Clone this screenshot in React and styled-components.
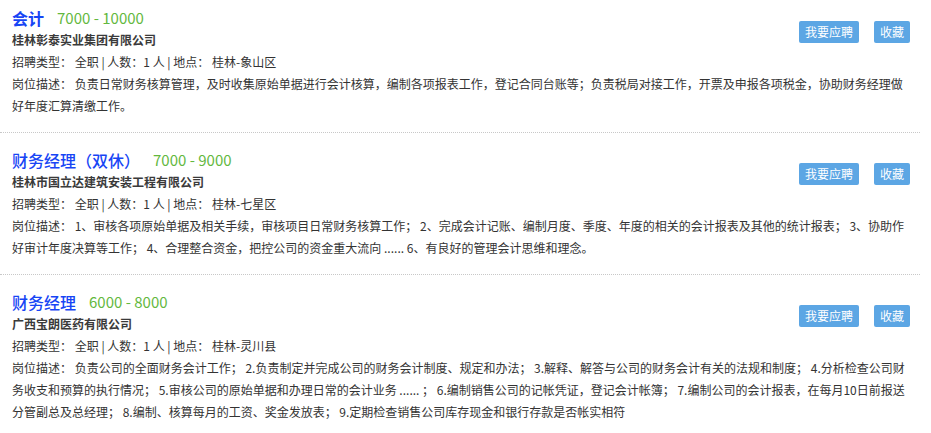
import React from "react";
import styled, { createGlobalStyle } from "styled-components";

const GlobalStyle = createGlobalStyle`
  body {
    margin: 0;
    background: #fff;
    font-family: "Noto Sans CJK SC", "Microsoft YaHei", sans-serif;
    color: #333;
  }
`;

const JobList = styled.ul`
  width: 920px;
  margin: 0;
  padding: 0;
  list-style: none;
`;

const JobItem = styled.li`
  padding: 16px 10px 15px 12px;
  border-bottom: 1px dotted #c8c8c8;

  &:first-child {
    padding-top: 7px;
  }

  &:last-child {
    border-bottom: none;
  }
`;

const Header = styled.div`
  display: flex;
  justify-content: space-between;
  align-items: flex-start;
`;

const Info = styled.div`
  display: flex;
  flex-direction: column;
`;

const TitleRow = styled.div`
  display: flex;
  align-items: center;
  height: 22px;
`;

const JobTitle = styled.a`
  font-size: 16px;
  line-height: 22px;
  color: #1745f5;
  font-weight: ${(p) => (p.$bold ? 700 : 500)};
  text-decoration: none;
`;

const Salary = styled.span`
  margin-left: 13px;
  font-size: 15px;
  line-height: 22px;
  color: #63b83e;
`;

const Company = styled.div`
  font-size: 12px;
  line-height: 22px;
  font-weight: 700;
  color: #3a3a3a;
`;

const Line = styled.div`
  font-size: 12px;
  line-height: 22px;
  color: #333;
`;

const Actions = styled.div`
  display: flex;
  gap: 15px;
  margin-top: 14px;
`;

const ActionButton = styled.button`
  height: 22px;
  padding: 0 6px;
  border: none;
  border-radius: 2px;
  background: #5ca6e4;
  color: #fff;
  font-family: inherit;
  font-size: 12px;
  line-height: 22px;
  cursor: pointer;
`;

const jobs = [
  {
    title: "会计",
    bold: true,
    salary: "7000 - 10000",
    company: "桂林彰泰实业集团有限公司",
    place: "桂林-象山区",
    desc: "负责日常财务核算管理，及时收集原始单据进行会计核算，编制各项报表工作，登记合同台账等；负责税局对接工作，开票及申报各项税金，协助财务经理做好年度汇算清缴工作。",
  },
  {
    title: "财务经理（双休）",
    salary: "7000 - 9000",
    company: "桂林市国立达建筑安装工程有限公司",
    place: "桂林-七星区",
    desc: "1、审核各项原始单据及相关手续，审核项目日常财务核算工作； 2、完成会计记账、编制月度、季度、年度的相关的会计报表及其他的统计报表； 3、协助作好审计年度决算等工作； 4、合理整合资金，把控公司的资金重大流向 ...... 6、有良好的管理会计思维和理念。",
  },
  {
    title: "财务经理",
    salary: "6000 - 8000",
    company: "广西宝朗医药有限公司",
    place: "桂林-灵川县",
    desc: "负责公司的全面财务会计工作； 2.负责制定并完成公司的财务会计制度、规定和办法； 3.解释、解答与公司的财务会计有关的法规和制度； 4.分析检查公司财务收支和预算的执行情况； 5.审核公司的原始单据和办理日常的会计业务 ...... ； 6.编制销售公司的记帐凭证，登记会计帐簿； 7.编制公司的会计报表，在每月10日前报送分管副总及总经理； 8.编制、核算每月的工资、奖金发放表； 9.定期检查销售公司库存现金和银行存款是否帐实相符",
  },
];

const App = () => (
  <>
    <GlobalStyle />
    <JobList>
      {jobs.map((job) => (
        <JobItem key={job.title}>
          <Header>
            <Info>
              <TitleRow>
                <JobTitle href="#" $bold={job.bold}>
                  {job.title}
                </JobTitle>
                <Salary>{job.salary}</Salary>
              </TitleRow>
              <Company>{job.company}</Company>
              <Line>
                招聘类型： 全职 | 人数：1 人 | 地点： {job.place}
              </Line>
            </Info>
            <Actions>
              <ActionButton>我要应聘</ActionButton>
              <ActionButton>收藏</ActionButton>
            </Actions>
          </Header>
          <Line>岗位描述： {job.desc}</Line>
        </JobItem>
      ))}
    </JobList>
  </>
);

export default App;
